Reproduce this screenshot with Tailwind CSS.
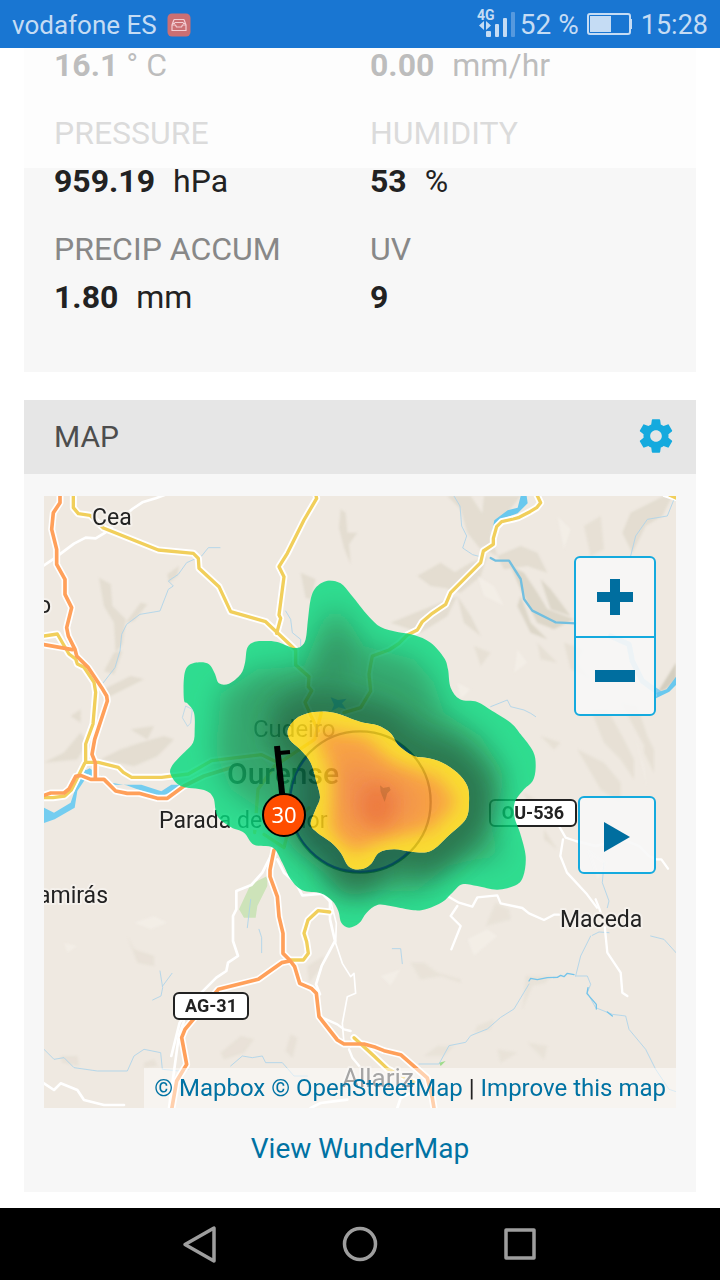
<!DOCTYPE html>
<html lang="en">
<head>
<meta charset="utf-8">
<meta name="viewport" content="width=device-width, initial-scale=1">
<title>Weather station</title>
<script src="https://cdn.jsdelivr.net/npm/@tailwindcss/browser@4"></script>
</head>
<body class="flex min-h-screen flex-col bg-white font-['Roboto',sans-serif] text-[#222]">

<header class="flex h-12 items-center bg-[#1976d2] px-3 pt-0.5 text-[27px] leading-none text-[#c5dcf4]">
  <span class="text-[26px]">vodafone ES</span>
  <svg class="ml-2.5 size-6" viewBox="0 0 24 24" aria-hidden="true">
    <rect x=".5" y=".5" width="23" height="23" rx="4.500" fill="#cb6f73"/>
    <path d="M7 6.500h10M7 6.500 5 12v5.500h14V12l-2-5.500M7.500 9.500h9M5 12h3.500l1 2h5l1-2H19M6 10.500h2M16 10.500h2" fill="none" stroke="#f3cdd3" stroke-width="1.200" stroke-linejoin="round"/>
  </svg>
  <div class="ml-auto flex items-center">
    <svg class="h-[34px] w-[39px]" viewBox="0 0 39 34" aria-label="4G signal">
      <text x="0" y="12" font-size="14" font-weight="700" fill="#c5dcf4">4G</text>
      <path d="M7 13v9l-5-4.500zM9 13v9l5-4.500z" fill="#c5dcf4"/>
      <rect x="9" y="23" width="5" height="6" rx="1" fill="#c5dcf4"/>
      <rect x="18" y="16" width="4" height="13" rx="1" fill="#c5dcf4"/>
      <rect x="26" y="10" width="4" height="19" rx="1" fill="#c5dcf4"/>
      <rect x="34" y="4" width="4" height="25" rx="1" fill="#5699de"/>
    </svg>
    <span class="ml-1 text-[28px]">52 %</span>
    <svg class="mb-0.5 ml-2 h-[22px] w-[46px]" viewBox="0 0 46 22" aria-label="Battery">
      <rect x="1" y="1" width="42" height="20" rx="2" fill="none" stroke="#c5dcf4" stroke-width="2"/>
      <rect x="3" y="3" width="21" height="16" fill="#c5dcf4"/>
      <path d="M43 6h2v10h-2z" fill="#c5dcf4"/>
    </svg>
    <time class="ml-2">15:28</time>
  </div>
</header>

<main class="relative flex-1 px-6">
  <div class="absolute inset-x-0 top-0 h-[120px] bg-white/70"></div>

  <section class="bg-[#f7f7f7] px-[30px] pb-[51px]" aria-label="Conditions">
    <dl class="grid grid-cols-[316px_1fr] gap-y-5 text-[32px] leading-[48px]">
      <div class="h-[41px] leading-[34px]"><dd><b>16.1</b> ° C</dd></div>
      <div class="h-[41px] leading-[34px]"><dd><b class="mr-2.5">0.00</b> mm/hr</dd></div>
      <div><dt class="text-[#888]">PRESSURE</dt><dd><b class="mr-2.5">959.19</b> hPa</dd></div>
      <div><dt class="text-[#888]">HUMIDITY</dt><dd><b class="mr-2.5">53</b> %</dd></div>
      <div><dt class="text-[#888]">PRECIP ACCUM</dt><dd><b class="mr-2.5">1.80</b> mm</dd></div>
      <div><dt class="text-[#888]">UV</dt><dd><b>9</b></dd></div>
    </dl>
  </section>

  <section class="mt-7 bg-[#f7f7f7]" aria-labelledby="map-title">
    <div class="flex h-[74px] items-center justify-between bg-[#e6e6e6] pr-5 pb-0.5 pl-[30px]">
      <h2 id="map-title" class="text-[30px] text-[#4d4d4d]">MAP</h2>
      <button type="button" aria-label="Map settings">
        <svg class="size-10" viewBox="0 0 24 24" fill="#15aade" aria-hidden="true"><path d="M19.430 12.980c.04-.32.07-.64.07-.98s-.03-.66-.07-.98l2.110-1.650c.19-.15.24-.42.12-.64l-2-3.460c-.12-.22-.39-.3-.61-.22l-2.490 1c-.52-.4-1.080-.73-1.690-.98l-.38-2.650C14.460 2.180 14.250 2 14 2h-4c-.25 0-.46.18-.49.42l-.38 2.650c-.61.25-1.170.59-1.690.98l-2.490-1c-.23-.09-.49 0-.61.22l-2 3.460c-.13.22-.07.49.12.64l2.110 1.650c-.04.32-.07.65-.07.98s.03.66.07.98l-2.110 1.650c-.19.15-.24.42-.12.64l2 3.460c.12.22.39.3.61.22l2.490-1c.52.4 1.080.73 1.690.98l.38 2.650c.03.24.24.42.49.42h4c.25 0 .46-.18.49-.42l.38-2.650c.61-.25 1.170-.59 1.690-.98l2.490 1c.23.09.49 0 .61-.22l2-3.460c.12-.22.07-.49-.12-.64l-2.110-1.650zM12 15.500c-1.930 0-3.500-1.570-3.500-3.500s1.570-3.500 3.500-3.500 3.500 1.570 3.500 3.500-1.570 3.500-3.500 3.500z"/></svg>
      </button>
    </div>

    <div class="px-5 pt-[22px]">
      <div class="relative overflow-hidden bg-[#efe9e1]">
        <svg class="block w-full" viewBox="0 0 632 612" role="img" aria-label="Radar map around Ourense">
          <defs>
            <filter id="wide" x="-30%" y="-30%" width="160%" height="160%"><feGaussianBlur stdDeviation="42"/></filter>
            <filter id="mid" x="-30%" y="-30%" width="160%" height="160%"><feGaussianBlur stdDeviation="26"/></filter>
            <filter id="land"><feGaussianBlur stdDeviation="3"/></filter>
            <clipPath id="rainClip"><path data-blob="rain storm" clip-rule="evenodd"/></clipPath>
            <clipPath id="stormClip"><path data-blob="storm"/></clipPath>
          </defs>

          <g transform="scale(.33333)" fill="none" stroke-linejoin="round" stroke-linecap="round">
            <!-- terrain shading -->
            <g fill="#d8d1c1" opacity=".5" filter="url(#land)">
              <path d="M165 245l35 20 5 65 40 40-10 75-20 25-5-90-30-50zM290 320l20 5-40 50-25 5zM370 235l35-25-5 30-25 20zM210 470l25-5-25 70-30-10zM180 580l80-40 40 10-60 30-60 30z"/>
              <path d="M890 40l15 10 5 60 30 0-25 35 5 60-20-50-15-60zM770 230l45 20-15 60-15-5z"/>
              <path d="M1210 0l70 0 40 60 20 60-30 40-40-50-20-70zM1320 0l110 0-40 50-50 60 20 70-40-20-10-60z"/>
              <path d="M1280 200l50-20-20 60-60 50-40-10 20-50zM1360 180l70-30 50 20 30 60-60-20-70 10zM1120 240l70-40 60 40-20 40-70-10zM1140 340l100-40-30 60-80 50-90-30zM1240 300l40 60 30 60-50-40z"/>
              <path d="M1400 210l40 20 40 60 30 50 80 30-60 30-50-20-50-100zM1430 300l30 80 50 50-50-20-40-80zM1490 250l30 30 60 80-60-20z" fill="#cbc5b1"/>
              <path d="M1760 50l100-50 25 0-30 60-50 30-40 80-30-60z"/>
              <path d="M1840 590l56-90v50l-30 30z" fill="#b9b49f"/>
              <path d="M1620 90l50-30 10 100-40 20zM1480 440l60 60-50-10zM1290 450l50 20-30 40zM1560 440l60 20-20 40 40 50-60-30z" opacity=".7"/>
              <path d="M1640 640l50 0 50 90 30 60 0 60-40-60-50-50zM1730 620l50 10 30 90 20 80-40-70zM1600 760l80 40 50 60 0 60-60-40zM1490 720l60 20-20 20zM1800 700l30 60 0 70-30-60zM1440 890l50 30-20 50zM1500 1000l40 60-40-30z" opacity=".7"/>
              <path d="M0 800l60-30 50-60 20 30-30 50zM170 790l60-30 60-20 70-20 30 10-50 50-70 30zM80 660l30-20 0 40zM260 700l70-10-20 40z"/>
              <path d="M250 1320l20 40 60 20 0 30-50-10zM790 1410l50-30-5 30-40 50zM740 1615l20 10-15 60-20-20zM530 1670l60-50 40 10-30 40-60 20zM50 1680l50 0 5 30-50-10zM300 1700l30-10 10 20-40 5z" opacity=".6"/>
              <path d="M1325 1290l30-70 40 20 5 30zM1445 1440h75l-15 20-40 10-30 70 5-40zM1100 1400l40 0 40 30 70 20 0 10-60-20-60 10zM1300 1590l50-20-10 30-50 10zM1140 1680l40-30 50 0-30 30zM1360 1660l60 10-50 30zM1450 1640l60 10-10 40z" opacity=".5"/>
            </g>
            <g fill="#f7f3ec" opacity=".5" filter="url(#land)">
              <path d="M1300 240l50 30 30 60-60-30zM1540 60l40 40-20 60zM1240 560l40 20-30 30zM1420 460l30 40-40 30zM270 1280l60-20 40 20-50 20zM1630 1060l60 40-30 50zM1270 1330l60-30 30 20-70 60zM60 1340l40 10-30 20zM1010 1440l60-20-30 50zM1770 720l30 90 10 70-20-90z"/>
            </g>
            <path d="M620 1165l50-25 0 30-30 60-5 35-35 0-15-25z" fill="#cde3b9"/>
            <path d="M1185 1700l20-5-15 15z" fill="#9fdc8c"/>

            <!-- rivers -->
            <g stroke="#a9d2ea" stroke-width="2.500">
              <path d="M178 560l35-45 15-50 5-50 15-30 40-30 60-10 25-65 15-10-15-15 30-20 25-35 45-20 20-25 35 0M725 345l15 25 5 40 25 20 0 20"/>
              <path d="M1230 0l18 30 5 60 15 30-12 36 30 20 30 8M1890 10l-20 50-60 10-35 50-15 60M1340 632l50-20 10 20 40 10 20 10 15 10"/>
              <path d="M348 1425l8 50-5 25-25 12M356 1470l28-38M645 1300l8 25 0 45M620 1210l-10 85M0 1660l30 30 30-5 30 30 70 10 90 0 20-45 30-20 50 10 5 50 50 5 30-5M560 1710l35-30 30 5 30-5 10 20 50 0 35 40 40 0M1045 1358h25l5 45"/>
              <path d="M1125 1704h60l30-55 50-10 15-20 50-20 40-35 40-25 45-75M1595 1440l15-60 30-60M1645 1318l20-10 30 2M1595 1440l35 0 10 25-10 25 25 45 50 20 40 5 10 40 50 60 30 60 40 60 30 10M1820 1320l40 10 36 40M1680 1100l-5 60 20 55-5 20"/>
              <path d="M430 690l-15-25 10-35 20 10-5 40z" stroke-width="2"/>
            </g>
            <path d="M1455 1455l5-8 20 4 30-6 30-1 10-6 10 4 10-10 20 4M1632 1475l-3 18 28 32 0 14M1690 1548l15 12" stroke="#74c4ea" stroke-width="4"/>
            <g stroke="#72bfe0" stroke-width="7">
              <path d="M1340 186l15 8h40l35 55 10 60 25 35 70 35 60 3"/>
              <path d="M1700 420l55 25 10 50 30 60 50 36" stroke="#8ecdea" stroke-width="16"/>
            </g>
            <path d="M1430 0h18l3 22-30 30-40 15-20 28-8 28-10-10 8-40 40-30 30-8zM1838 590l30-10 28-38v25l-20 20-40 20z" fill="#69c8ee"/>
            <path d="M0 935l30 15 50-30 25-75 15-25 20 5-40 60-8 50-60 35-35 12-32-25zM122 825l15-8 15 10-5 18zM172 838l40 28h80l60 20 30-20 35 0-5 10-60 25-35-8-70-25-60-10z" fill="#74cdf0"/>

            <!-- minor roads -->
            <g stroke="#fff" stroke-width="8">
              <path d="M0 208l30-20 60-45 35-18 30 2 30-18 80-70 30-20 40-12 40-15"/>
              <path d="M680 1080l-25 50-33 37-45 18 0 55-10 20 0 75 15 45-30 20-5 25-30 20-45 45-65 90-25 100M700 1090l20 40 35 30 20 38 60-5 25 25"/>
              <path d="M858 1215l0 55 15 65-40 75-17 55 12 30"/>
              <path d="M862 1222l15 60-2 60 20 60 25 40 10-10 5 60-25 10-15 80 5 60 20 10" stroke-width="5"/>
              <path d="M835 1565l45 20 20 15 20 5M915 1660l10 25 25 30" stroke-width="7"/>
              <path d="M1210 1200l35 20 40 12 15-28 60-6 10 24 65 14 20 16 45 20 30-16 15 0M1240 1230l-20 30 30 30-28 70M1655 1210l12 30 15 50 8 80 40 60 5 60 15 10" stroke-width="7"/>
              <path d="M1545 990l20 35 30 10 60 15 80-20 50 20 30 30 22 10 15 0 20 28M1557 1030l-8 50 20 50 60 65 30 40M1860 0l36 12" stroke-width="7"/>
              <path d="M0 1762l30 20 20-20 50 20 20 30 60 15 60 0M800 1836l30-15 80-10M1060 1836l10-30 30-15M375 1836l30-220 15-40"/>
            </g>

            <!-- casings, then coloured carriageways -->
            <g stroke="#fff" stroke-width="21">
              <path data-road="a"/><path data-road="b"/><path data-road="c"/><path data-road="d"/><path data-road="e"/><path data-road="f"/><path data-road="g"/><path data-road="h"/><path data-road="i"/><path data-road="j"/><path data-road="k"/><path data-road="l"/>
            </g>
            <g stroke="#f1cf5b" stroke-width="10">
              <path data-road="a" d="M88-5v40l15 18 35 5 40 38 165 66 105 10 15 15 2 30 60 55 35 75 105 30 90 85 0 45 40 35 -2 30 10 12-20 35 20 45 20 40"/>
              <path data-road="b" d="M815-5l3 12-38 65-50 100-25 40 15 30-15 115 5 10-12 45"/>
              <path data-road="c" d="M1478-5l12 25-12 15-20 12-15 8-20 10-15 4-35 8-15 15-10 35 0 18-30 20-8 35-90 90-15 35-40 27-30 25-15 25-30 15-25 25-30 20-50 18-5 25-5 30 5 50-30 50-50 15"/>
              <path data-road="d" d="M0 420l40-6 35 60 20 15 5 15 20 10 30 45 5 30-8 95-22 60v55h38l60 15 15 15 25 15h90l80-10 70-40 150-18 40 20"/>
              <path data-road="e" d="M122 802l-40 80-20 18-35 5H0"/>
              <path data-road="f" d="M740 1392h38l15-20-5-35-8-25 12-40 30-28 35 4"/>
              <path data-road="l" d="M930 1625l60 55 40 38 80 40"/>
              <path d="M632 1010l10-130 50-70 120-80 20-80M660 1015l60 40 15-60 60-60M1878-2l18 8"/>
            </g>
            <g stroke="#ffa05a" stroke-width="11">
              <path data-road="g" d="M48-5v25l-20 30-5 50 15 60 0 45 25 45 0 45 20 40-15 60 5 25 20 40 5 20 35 35 40 60 15 25 2 15-38 115-8 45 10 25v48"/>
              <path data-road="h" d="M0 446l85 15"/>
              <path data-road="i" d="M0 898l20-7h40l15-12 20-38 15-3 30 12h40l35 35 35 7h35l55 15h30l50-37 60-30 80-25"/>
              <path data-road="j" d="M690 1062l-12 60 0 20 22 60 5 60 12 50 0 60 20 20 15 20 15 50 35 15 15 15 8 70 55 70 20 12h60l35 10 25 10 50 12 80 70 15 60 5 30"/>
              <path data-road="k" d="M738 1395l-25 5-70 50-120 30-50 60-50 60-10 25 15 80-30 50-15 85"/>
            </g>
          </g>

          <!-- place names -->
          <g font-size="23" fill="#222" stroke="#f5f1ec" stroke-width="4" paint-order="stroke" stroke-linejoin="round">
            <text x="48" y="29">Cea</text>
            <text x="-6" y="117">o</text>
            <text x="209" y="241" font-size="24" fill="#4a4a4a" stroke="none">Cudeiro</text>
            <text x="183" y="288" font-size="30" font-weight="500" stroke="none">Ourense</text>
            <text x="115" y="332">Parada de</text>
            <text x="257" y="332" stroke="none">lor</text>
            <text x="-6" y="407">amirás</text>
            <text x="516" y="431">Maceda</text>
            <text x="298" y="591" font-size="26" fill="#4a4a4a">Allariz</text>
          </g>
          <g font-size="18" font-weight="700" fill="#222" text-anchor="middle">
            <rect x="130" y="497" width="74" height="26" rx="5" fill="#fff" stroke="#222" stroke-width="2"/>
            <text x="167" y="516">AG-31</text>
            <rect x="446" y="304" width="86" height="26" rx="5" fill="#fff" stroke="#222" stroke-width="2"/>
            <text x="489" y="323">OU-536</text>
          </g>

          <!-- range ring and radar echo -->
          <g transform="scale(.33333)">
            <circle cx="948" cy="918" r="212" fill="none" stroke="#1d3350" stroke-width="7"/>
            <g opacity=".82" clip-path="url(#rainClip)">
              <rect width="1896" height="1836" fill="#05da7e"/>
              <path d="M850 340L900 350 960 450 1110 490 1170 560 1200 650 1310 720 1390 850 1330 980 1380 1080 1300 1090 1210 1110 1110 1190 1000 1180 920 1210 840 1130 750 1060 680 960 560 880 510 760 530 650 520 600 640 520 780 510z" fill="#0a9954" filter="url(#wide)"/>
              <path data-blob="storm" fill="none" stroke="#06592c" stroke-width="100" filter="url(#wide)"/>
              <g fill="none" stroke="#06572c" stroke-width="50" filter="url(#wide)" opacity=".55">
                <path d="M680 660L760 610 900 610 1080 690 1200 760 1300 860 1320 950 1230 1040 1120 1150M850 560l40-110"/>
                <path d="M1000 1120L920 1170 850 1120"/>
              </g>
            </g>
            <circle cx="948" cy="918" r="209" fill="#0a3550" fill-opacity=".2" stroke="#03455f" stroke-opacity=".8" stroke-width="6" clip-path="url(#rainClip)"/>
            <g opacity=".84" clip-path="url(#stormClip)">
              <rect width="1896" height="1836" fill="#fbd812"/>
              <path d="M820 705L960 730 1040 810 1180 855 1225 920 1160 990 1020 1015 930 1060 870 1000 890 860z" fill="#f99526" stroke="#f99526" stroke-width="20" filter="url(#mid)"/>
              <path d="M890 780L1000 830 1120 890 1120 950 1030 990 920 1000 890 920z" fill="#f07a34" filter="url(#wide)"/>
              <ellipse cx="1000" cy="930" rx="50" ry="65" fill="#ec621c" opacity=".8" filter="url(#mid)"/>
            </g>
            <path d="M1008 868l10 8 18-4 4 10-10 10-8 26-12-30z" fill="#a0602a" opacity=".4"/>
            <path d="M860 604l22 8 26-4-14 14 12 18-22-6-22 12 8-20z" fill="#0a6a62" opacity=".6"/>
          </g>

          <!-- station marker with wind barb -->
          <path d="M233 250l6 56" fill="none" stroke="#000" stroke-width="6"/>
          <path d="M235 257l11-1" fill="none" stroke="#000" stroke-width="4"/>
          <circle cx="240" cy="319" r="21" fill="#ff4d00" stroke="#000" stroke-width="2"/>
          <text x="240" y="327" text-anchor="middle" font-family="Noto Sans" font-size="22" fill="#fff">30</text>
        </svg>

        <div class="absolute top-[60px] right-5 flex w-[82px] flex-col divide-y-2 divide-[#15aade] rounded-md border-2 border-[#15aade] bg-[#f7f7f7]/90">
          <button type="button" aria-label="Zoom in" class="flex h-20 items-center justify-center">
            <svg class="size-9" viewBox="0 0 36 36" fill="#006e9f" aria-hidden="true"><path d="M13 0h10v13h13v10H23v13H13V23H0V13h13z"/></svg>
          </button>
          <button type="button" aria-label="Zoom out" class="flex h-[76px] items-center justify-center">
            <svg class="h-3 w-10" viewBox="0 0 40 12" fill="#006e9f" aria-hidden="true"><path d="M0 0h40v12H0z"/></svg>
          </button>
        </div>
        <button type="button" aria-label="Play radar" class="absolute top-[300px] right-5 flex size-[78px] items-center justify-center rounded-md border-2 border-[#15aade] bg-[#f7f7f7]/90 pt-1">
          <svg class="h-[30px] w-[26px]" viewBox="0 0 26 30" fill="#006e9f" aria-hidden="true"><path d="M0 0l26 15L0 30z"/></svg>
        </button>
        <p class="absolute right-0 bottom-0 bg-white/50 px-2.5 text-2xl leading-10 whitespace-nowrap text-[#222]"><a href="#" class="text-[#0072a3]">© Mapbox</a> <a href="#" class="text-[#0072a3]">© OpenStreetMap</a> | <a href="#" class="text-[#0072a3]">Improve this map</a></p>
      </div>
    </div>
    <div class="flex h-[84px] items-center justify-center pb-0.5 text-[28px]"><a href="#" class="text-[#0072a3]">View WunderMap</a></div>
  </section>
</main>

<nav class="mt-4 flex h-[72px] items-center justify-center gap-[120px] bg-black" aria-label="System">
  <button type="button" aria-label="Back"><svg class="size-10" viewBox="0 0 40 40" fill="none" stroke="#9e9e9e" stroke-width="3.500" stroke-linejoin="round" aria-hidden="true"><path d="M34 4v33L5 20.500z"/></svg></button>
  <button type="button" aria-label="Home"><svg class="size-10" viewBox="0 0 40 40" fill="none" stroke="#9e9e9e" stroke-width="3.500" aria-hidden="true"><circle cx="20" cy="20" r="15.500"/></svg></button>
  <button type="button" aria-label="Recent apps"><svg class="size-10" viewBox="0 0 40 40" fill="none" stroke="#9e9e9e" stroke-width="3.500" stroke-linejoin="round" aria-hidden="true"><path d="M6 6h28v28H6z"/></svg></button>
</nav>

<script>
// Outlines of the radar echoes, as closed loops of points
const outlines = {
  rain: [[420,612],[420,545],[432,510],[465,499],[495,505],[512,532],[525,562],[555,563],[590,535],[603,500],[610,455],[632,437],[665,435],[700,438],[745,455],[770,452],[785,430],[792,370],[800,310],[815,275],[850,254],[890,262],[920,295],[948,330],[975,362],[1010,393],[1060,408],[1110,417],[1160,440],[1200,485],[1212,520],[1220,575],[1248,610],[1300,618],[1345,645],[1400,680],[1430,715],[1468,768],[1475,815],[1466,855],[1440,880],[1412,920],[1412,965],[1428,1010],[1445,1080],[1438,1140],[1415,1168],[1360,1181],[1300,1170],[1255,1165],[1225,1190],[1195,1218],[1150,1238],[1110,1243],[1040,1230],[1000,1227],[968,1250],[945,1282],[915,1295],[892,1280],[883,1245],[865,1215],[830,1192],[775,1183],[740,1150],[715,1100],[687,1055],[630,1046],[600,1010],[560,993],[520,960],[508,905],[480,882],[410,870],[380,835],[385,808],[415,775],[447,740],[452,700],[450,650],[430,622]],
  storm: [[732,700],[760,665],[810,648],[870,650],[948,677],[1000,688],[1040,712],[1065,750],[1110,780],[1150,786],[1195,800],[1240,830],[1270,870],[1275,920],[1265,970],[1215,1018],[1160,1065],[1100,1067],[1050,1060],[1005,1070],[980,1105],[950,1120],[915,1112],[890,1070],[860,1038],[820,1010],[800,985],[815,940],[828,905],[818,860],[800,800],[770,762],[738,732]]
};
// Catmull-Rom loop written as cubic segments
function loop(p) {
  const n = p.length;
  let d = 'M' + p[0];
  for (let i = 0; i < n; i++) {
    const a = p[(i + n - 1) % n], b = p[i], c = p[(i + 1) % n], e = p[(i + 2) % n];
    d += 'C' + [b[0] + (c[0] - a[0]) / 6, b[1] + (c[1] - a[1]) / 6, c[0] - (e[0] - b[0]) / 6, c[1] - (e[1] - b[1]) / 6, c[0], c[1]];
  }
  return d + 'Z';
}
document.querySelectorAll('[data-blob]').forEach(el => {
  el.setAttribute('d', el.dataset.blob.split(' ').map(name => loop(outlines[name])).join(''));
});
// Each casing takes the course of the road drawn above it
document.querySelectorAll('[data-road]:not([d])').forEach(el => {
  el.setAttribute('d', document.querySelector('[data-road="' + el.dataset.road + '"][d]').getAttribute('d'));
});
</script>
</body>
</html>
